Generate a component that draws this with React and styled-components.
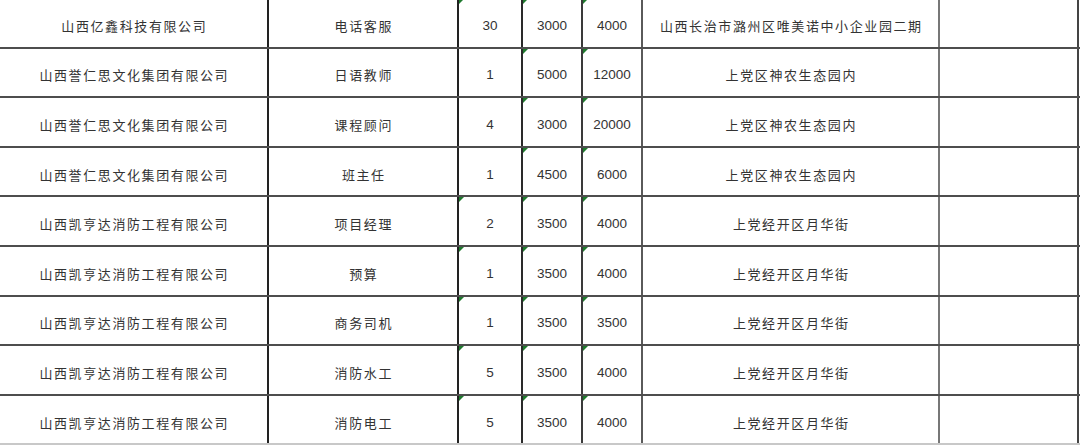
import React from "react";
import styled, { createGlobalStyle } from "styled-components";

const Global = createGlobalStyle`
  html, body { margin: 0; padding: 0; background: #fff; }
  body { width: 1080px; height: 446px; overflow: hidden; }
`;

const cols = [
  { w: 269, line: "#222" },
  { w: 190, line: "#222" },
  { w: 64, line: "#2a2a2a" },
  { w: 60, line: "#3a3a3a" },
  { w: 60, line: "#5a5a5a" },
  { w: 297, line: "#777" },
  { w: 139, line: "#444" },
];

const rows = [
  ["山西亿鑫科技有限公司", "电话客服", "30", "3000", "4000", "山西长治市潞州区唯美诺中小企业园二期", true],
  ["山西誉仁思文化集团有限公司", "日语教师", "1", "5000", "12000", "上党区神农生态园内", false],
  ["山西誉仁思文化集团有限公司", "课程顾问", "4", "3000", "20000", "上党区神农生态园内", false],
  ["山西誉仁思文化集团有限公司", "班主任", "1", "4500", "6000", "上党区神农生态园内", false],
  ["山西凯亨达消防工程有限公司", "项目经理", "2", "3500", "4000", "上党经开区月华街", true],
  ["山西凯亨达消防工程有限公司", "预算", "1", "3500", "4000", "上党经开区月华街", true],
  ["山西凯亨达消防工程有限公司", "商务司机", "1", "3500", "3500", "上党经开区月华街", true],
  ["山西凯亨达消防工程有限公司", "消防水工", "5", "3500", "4000", "上党经开区月华街", true],
  ["山西凯亨达消防工程有限公司", "消防电工", "5", "3500", "4000", "上党经开区月华街", true],
];

const Sheet = styled.div`
  width: 1080px;
  margin-top: -1px;
  display: flex;
  flex-direction: column;
`;

const Row = styled.div`
  display: flex;
  height: 49.6px;
  box-sizing: border-box;
  border-bottom: 2px solid ${(p) => (p.$last ? "#c8c8c8" : "#4e4e4e")};
`;

const Cell = styled.div`
  position: relative;
  flex: 0 0 ${(p) => p.$w}px;
  box-sizing: border-box;
  border-right: 2px solid ${(p) => p.$line};
  display: flex;
  align-items: center;
  justify-content: center;
  padding-top: 5px;
  color: #333;
  font-family: ${(p) =>
    p.$num
      ? `"Liberation Sans", Arial, sans-serif`
      : `"Noto Sans CJK SC", "Noto Sans", sans-serif`};
  font-size: ${(p) => (p.$num ? "13.5px" : "13px")};
  letter-spacing: ${(p) => (p.$num ? "0px" : "1.6px")};
  text-indent: ${(p) => (p.$num ? "0px" : "1.6px")};
  white-space: nowrap;
`;

const Flag = styled.span`
  position: absolute;
  left: 0;
  top: 0;
  width: 0;
  height: 0;
  border-top: 5px solid #1f7a2e;
  border-right: 5px solid transparent;
`;

export default function App() {
  return (
    <>
      <Global />
      <Sheet>
        {rows.map((r, i) => (
          <Row key={i} $last={i === rows.length - 1}>
            {cols.map((c, j) => {
              const text = j < 6 ? r[j] : "";
              const num = j >= 2 && j <= 4;
              const flag = (j === 3 || j === 4) || (j === 2 && r[6]);
              return (
                <Cell key={j} $w={c.w} $line={c.line} $num={num}>
                  {flag && <Flag />}
                  {text}
                </Cell>
              );
            })}
          </Row>
        ))}
      </Sheet>
    </>
  );
}
